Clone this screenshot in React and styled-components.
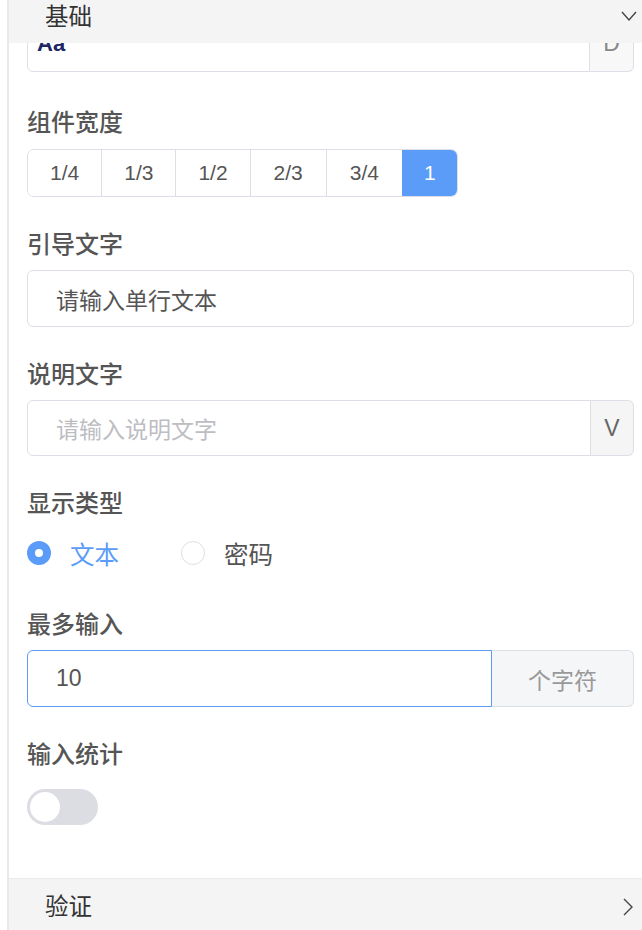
import React from "react";
import styled, { createGlobalStyle } from "styled-components";

const GlobalStyle = createGlobalStyle`
  html, body { margin: 0; padding: 0; background: #fff; overflow: hidden; }
  body { font-family: "Liberation Sans", "Noto Sans CJK SC", sans-serif; }
  * { box-sizing: border-box; }
`;

const BLUE = "#5a9cf8";
const LINE = "#dcdfe6";

const Frame = styled.div`
  margin-left: 7px;
  border-left: 2px solid #e9e9eb;
  width: 635px;
  height: 934px;
  display: flex;
  flex-direction: column;
  overflow: hidden;
`;

const SectionHeader = styled.div`
  flex: none;
  height: ${(p) => p.$height}px;
  background: #f4f4f5;
  border-top: ${(p) => (p.$topBorder ? "1px solid #ebebed" : "none")};
  display: flex;
  align-items: ${(p) => (p.$top ? "flex-start" : "center")};
  justify-content: space-between;
  padding-left: 36px;
  color: #333;
  font-size: 23.5px;
  line-height: 34px;
`;

const HeaderTitle = styled.span``;

const HeaderIcon = styled.svg`
  flex: none;
  width: 18px;
  height: 18px;
  margin-right: ${(p) => p.$mr}px;
  margin-top: ${(p) => p.$mt || 0}px;
  color: #444;
`;

const Body = styled.div`
  flex: 1;
  padding: 0 8px 0 18px;
  display: flex;
  flex-direction: column;
`;

const ClipRow = styled.div`
  height: 29px;
  overflow: hidden;
  display: flex;
  flex-direction: column;
  justify-content: flex-end;
  margin-bottom: 36px;
`;

const Field = styled.div`
  display: flex;
  flex-direction: column;
  margin-bottom: ${(p) => p.$mb ?? 33}px;
`;

const Label = styled.div`
  font-size: 24px;
  line-height: 30px;
  color: #555;
  font-weight: 500;
  margin-bottom: ${(p) => p.$gap ?? 10}px;
`;

const InputGroup = styled.div`
  display: flex;
  height: ${(p) => p.$h || 57}px;
  flex: none;
`;

const InputBox = styled.div`
  flex: 1;
  display: flex;
  align-items: center;
  padding-left: ${(p) => p.$pl ?? 28}px;
  font-size: 23px;
  color: ${(p) => (p.$placeholder ? "#bdbdc2" : "#555")};
  background: #fff;
  border: 1px solid ${(p) => (p.$focus ? BLUE : LINE)};
  border-radius: ${(p) => (p.$alone ? "6px" : "6px 0 0 6px")};
`;

const FontSample = styled.span`
  font-family: "Liberation Sans", sans-serif;
  font-weight: 700;
  font-size: 22px;
  color: #1c2566;
`;

const Addon = styled.div`
  flex: none;
  width: ${(p) => p.$w}px;
  display: flex;
  align-items: center;
  justify-content: center;
  background: ${(p) => p.$bg || "#f5f5f5"};
  border: 1px solid ${LINE};
  border-left: none;
  border-radius: 0 6px 6px 0;
  font-size: 23px;
  color: ${(p) => p.$color || "#666"};
`;

const Segmented = styled.div`
  display: flex;
  align-self: flex-start;
  height: 48px;
  border: 1px solid ${LINE};
  border-radius: 7px;
  overflow: hidden;
`;

const Segment = styled.div`
  display: flex;
  align-items: center;
  justify-content: center;
  padding: 0 ${(p) => p.$px || 22}px;
  font-size: 21px;
  color: ${(p) => (p.$active ? "#fff" : "#555")};
  background: ${(p) => (p.$active ? BLUE : "#fff")};
  border-left: ${(p) => (p.$first ? "none" : `1px solid ${p.$active ? BLUE : LINE}`)};
`;

const RadioRow = styled.div`
  display: flex;
  align-items: center;
  height: 48px;
`;

const RadioItem = styled.div`
  display: flex;
  align-items: center;
  gap: 19px;
  font-size: 24.5px;
  color: ${(p) => (p.$checked ? BLUE : "#555")};
  width: ${(p) => p.$w || "auto"};
`;

const RadioDot = styled.span`
  flex: none;
  width: 24px;
  height: 24px;
  border-radius: 50%;
  background: ${(p) => (p.$checked ? BLUE : "#fff")};
  border: ${(p) => (p.$checked ? "none" : `1.5px solid ${LINE}`)};
  display: flex;
  align-items: center;
  justify-content: center;
  &::after {
    content: "";
    display: ${(p) => (p.$checked ? "block" : "none")};
    width: 8px;
    height: 8px;
    border-radius: 50%;
    background: #fff;
  }
`;

const Switch = styled.div`
  width: 71px;
  height: 36px;
  border-radius: 18px;
  background: #dcdde3;
  padding: 3px;
  display: flex;
  margin-top: 9px;
`;

const Knob = styled.span`
  width: 30px;
  height: 30px;
  border-radius: 50%;
  background: #fff;
`;

const Spacer = styled.div`
  flex: 1;
`;

export default function App() {
  return (
    <>
      <GlobalStyle />
      <Frame>
        <SectionHeader $height={43} $top>
          <HeaderTitle>基础</HeaderTitle>
          <HeaderIcon viewBox="0 0 18 18" $mr={4} $mt={7} fill="none" stroke="currentColor" strokeWidth="1.4">
            <path d="M2 5l7 8 7-8" />
          </HeaderIcon>
        </SectionHeader>
        <Body>
          <ClipRow>
            <InputGroup $h={57}>
              <InputBox $pl={9}>
                <FontSample>Aa</FontSample>
              </InputBox>
              <Addon $w={44} $bg="#f8f8f8" $color="#888">D</Addon>
            </InputGroup>
          </ClipRow>

          <Field>
            <Label $gap={11}>组件宽度</Label>
            <Segmented>
              <Segment $first>1/4</Segment>
              <Segment>1/3</Segment>
              <Segment>1/2</Segment>
              <Segment $px={23}>2/3</Segment>
              <Segment $px={23}>3/4</Segment>
              <Segment $active $px={21}>1</Segment>
            </Segmented>
          </Field>

          <Field>
            <Label>引导文字</Label>
            <InputGroup>
              <InputBox $alone>请输入单行文本</InputBox>
            </InputGroup>
          </Field>

          <Field>
            <Label>说明文字</Label>
            <InputGroup $h={56}>
              <InputBox $placeholder>请输入说明文字</InputBox>
              <Addon $w={43}>V</Addon>
            </InputGroup>
          </Field>

          <Field>
            <Label>显示类型</Label>
            <RadioRow>
              <RadioItem $checked $w="154px">
                <RadioDot $checked />
                文本
              </RadioItem>
              <RadioItem>
                <RadioDot />
                密码
              </RadioItem>
            </RadioRow>
          </Field>

          <Field>
            <Label>最多输入</Label>
            <InputGroup $h={57}>
              <InputBox $focus>10</InputBox>
              <Addon $w={142} $bg="#f5f6f8" $color="#999">个字符</Addon>
            </InputGroup>
          </Field>

          <Field $mb={0}>
            <Label>输入统计</Label>
            <Switch>
              <Knob />
            </Switch>
          </Field>
          <Spacer />
        </Body>
        <SectionHeader $height={56} $topBorder>
          <HeaderTitle>验证</HeaderTitle>
          <HeaderIcon viewBox="0 0 18 18" $mr={6} fill="none" stroke="currentColor" strokeWidth="1.4">
            <path d="M6 1l8 8-8 8" />
          </HeaderIcon>
        </SectionHeader>
      </Frame>
    </>
  );
}
